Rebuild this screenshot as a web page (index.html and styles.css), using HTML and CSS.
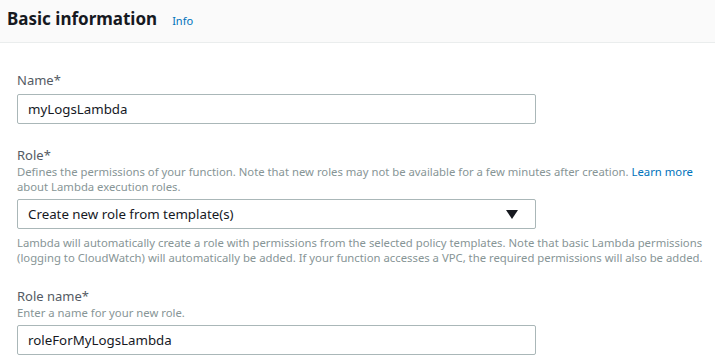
FILE: index.html
```html
<!DOCTYPE html>
<html>
<head>
<meta charset="utf-8">
<link rel="stylesheet" href="styles.css">
</head>
<body>
<div class="panel">
  <div class="panel-header">
    <h2 class="title">Basic information</h2>
    <a class="info" href="#">Info</a>
  </div>
  <div class="panel-body">
    <div class="field first">
      <label class="label">Name*</label>
      <div class="input">myLogsLambda</div>
    </div>
    <div class="field">
      <label class="label">Role*</label>
      <p class="desc">Defines the permissions of your function. Note that new roles may not be available for a few minutes after creation. <a class="link" href="#">Learn more</a> about Lambda execution roles.</p>
      <div class="input select">
        <span>Create new role from template(s)</span>
        <svg class="caret" width="12" height="9" viewBox="0 0 12 9"><path d="M0 0H12L6 9Z" fill="#16191f"/></svg>
      </div>
      <p class="desc after">Lambda will automatically create a role with permissions from the selected policy templates. Note that basic Lambda permissions (logging to CloudWatch) will automatically be added. If your function accesses a VPC, the required permissions will also be added.</p>
    </div>
    <div class="field">
      <label class="label">Role name*</label>
      <p class="desc">Enter a name for your new role.</p>
      <div class="input">roleForMyLogsLambda</div>
    </div>
  </div>
</div>
</body>
</html>
```
FILE: styles.css
```css
html, body {
  margin: 0;
  padding: 0;
  background: #fff;
  font-family: "Noto Sans", "Open Sans", sans-serif;
  color: #16191f;
}
.panel {
  width: 715px;
}
.panel-header {
  height: 43px;
  background: #fafafa;
  border-bottom: 1px solid #eaeded;
  display: flex;
  align-items: center;
  padding-left: 7px;
  box-sizing: border-box;
  padding-bottom: 5px;
}
.title {
  margin: 0;
  font-size: 17px;
  font-weight: 700;
  color: #16191f;
}
.info {
  margin-left: 15px;
  font-size: 11px;
  color: #0073bb;
  text-decoration: none;
  padding-top: 3px;
}
.panel-body {
  padding: 0 1px 0 17px;
}
.field {
  margin-top: 22px;
}
.field.first {
  margin-top: 28px;
}
.label {
  display: block;
  font-size: 13px;
  line-height: 18px;
  color: #545b64;
}
.desc {
  margin: 0;
  font-size: 11.3px;
  line-height: 15px;
  color: #879596;
}
.desc.after {
  margin-top: 6px;
}
.link {
  color: #0073bb;
  text-decoration: none;
}
.input {
  margin-top: 5px;
  width: 519px;
  height: 30px;
  box-sizing: border-box;
  border: 1px solid #aab7b8;
  border-radius: 2px;
  padding: 0 10px;
  display: flex;
  align-items: center;
  font-size: 13.3px;
  color: #16191f;
}
.select {
  justify-content: space-between;
}
.caret {
  margin-right: 7px;
}
```
